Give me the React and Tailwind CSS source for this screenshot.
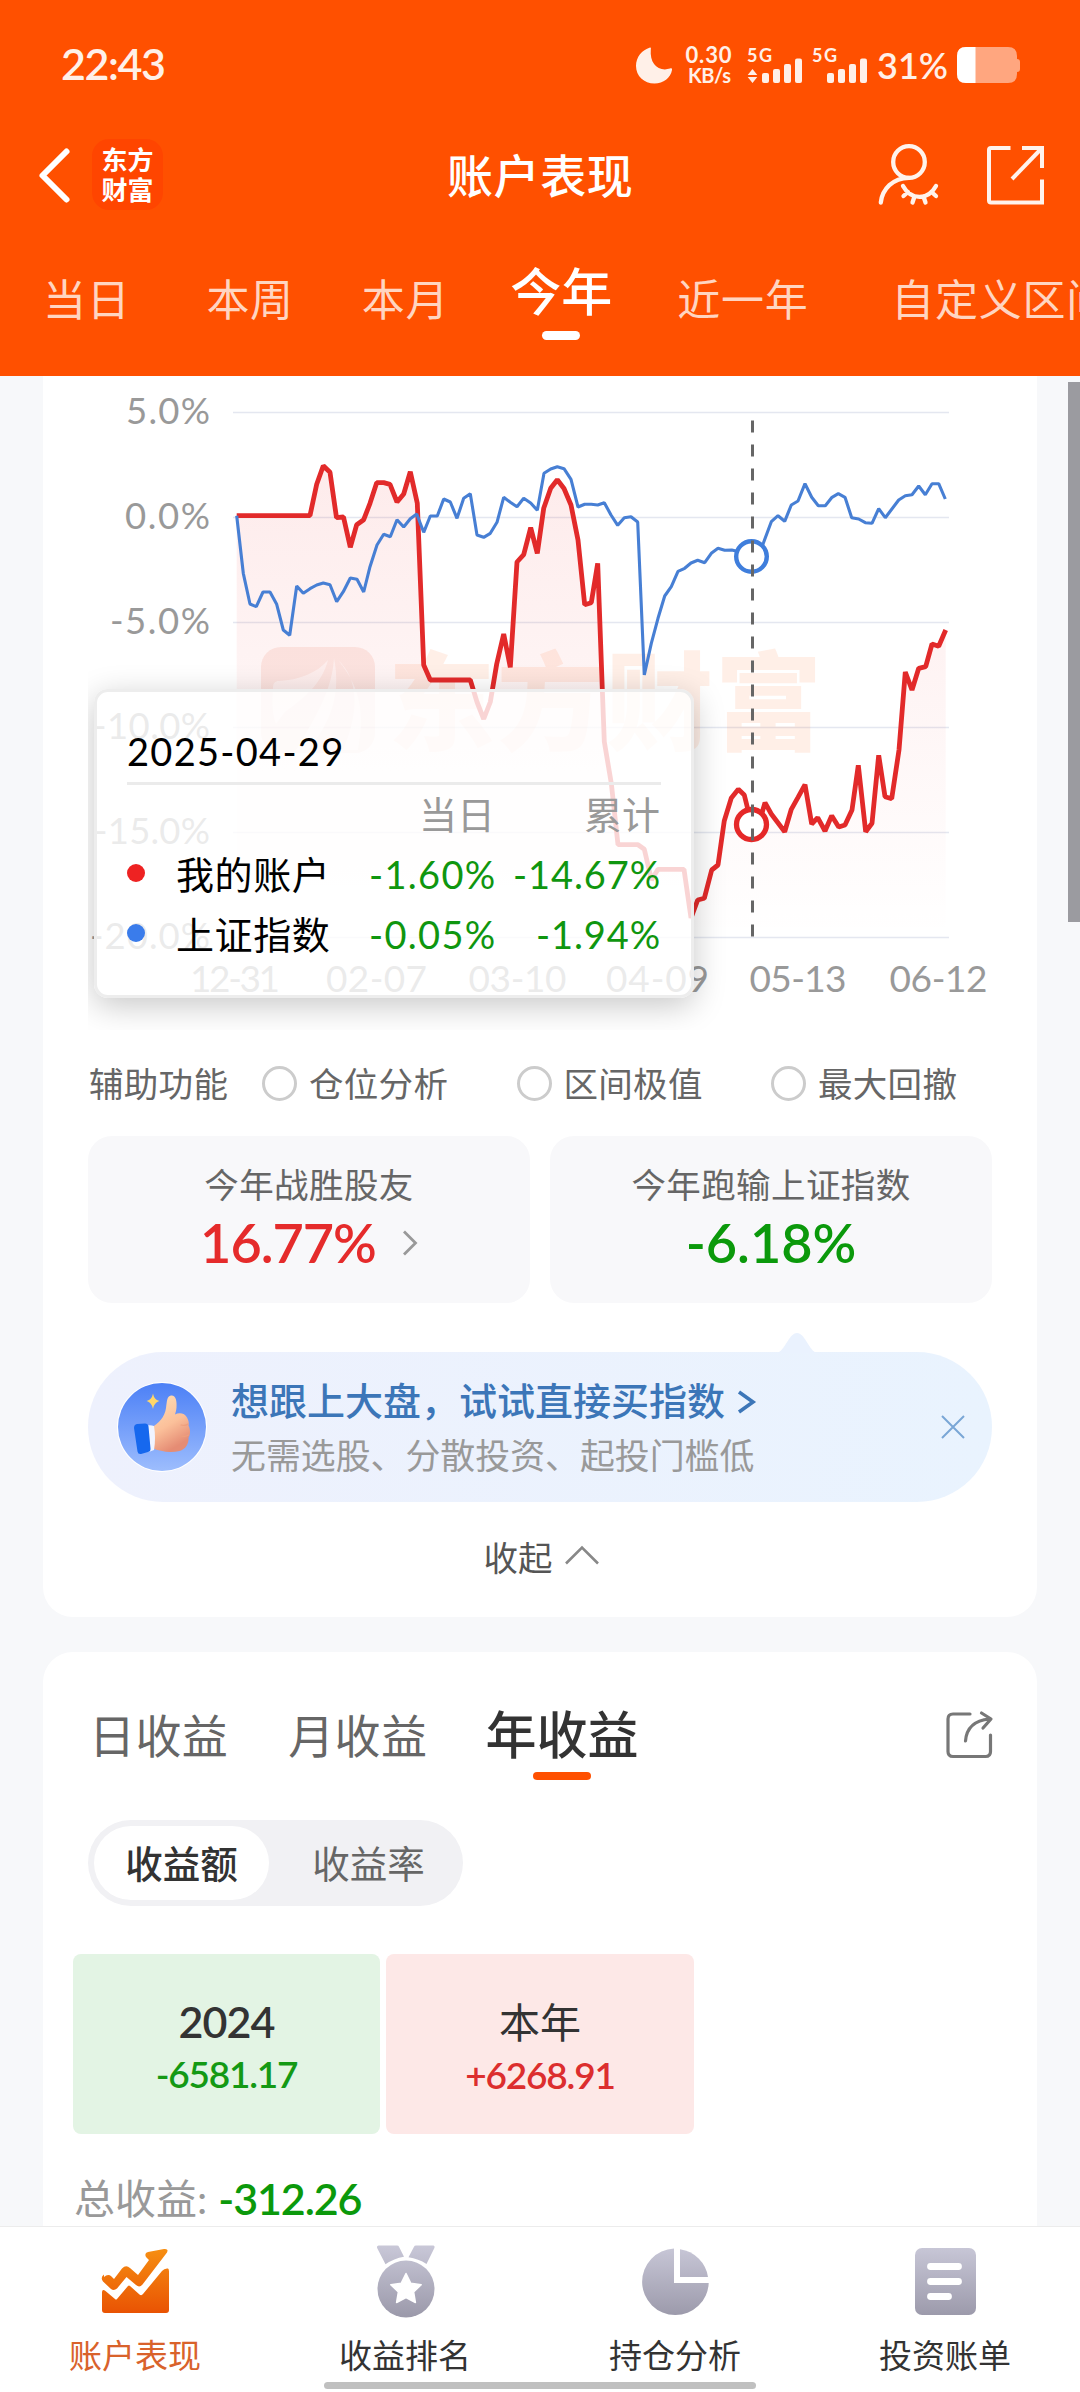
import React, { useState } from 'react';

const RANGE_TABS = [
    { id: 'day', name: '当日', className: 'ml-[43px]' },
    { id: 'week', name: '本周', className: 'ml-[76px]' },
    { id: 'month', name: '本月', className: 'ml-[68px]' },
    { id: 'ytd', name: '今年', className: 'ml-[61px]' },
    { id: 'year', name: '近一年', className: 'ml-[65px]' },
    { id: 'custom', name: '自定义区间', className: 'ml-[83px]' },
];

const HELPERS = ['仓位分析', '区间极值', '最大回撤'];

// Grid lines of the chart, 21px per percent
const Y_TICKS = [
    { label: '5.0%', y: 412.5, width: 84 },
    { label: '0.0%', y: 517.5, width: 85 },
    { label: '-5.0%', y: 622.5, width: 100 },
    { label: '-10.0%', y: 727.5, width: 117 },
    { label: '-15.0%', y: 832.5, width: 116 },
    { label: '-20.0%', y: 937.5, width: 120 },
];

const X_TICKS = [
    { label: '12-31', x: 235, width: 90 },
    { label: '02-07', x: 376.5, width: 101 },
    { label: '03-10', x: 517.5, width: 98 },
    { label: '04-09', x: 657.5, width: 103 },
    { label: '05-13', x: 798, width: 97 },
    { label: '06-12', x: 938.5, width: 98 },
];

const ACCOUNT_LINE = '236.7,515.700 310,515.500 316.7,484.3 323.3,465.7 330,472.3 336.5,517.7 343.5,517 350.3,547.3 356.7,524.7 363.7,519.7 370,503.3 376.7,482.7 383.7,482.7 390,484.3 397,502 403.7,494 410.3,471.7 417.3,503.3 423.7,665 430.3,680 470.3,680 477,702 483.7,719 490.3,702 496.7,664 503.7,634 510.3,667.3 517,562 523.7,554.7 530.7,527.7 537.3,553.3 543.7,508.3 550.7,488.3 557.3,479.7 564,488.5 571,505 578,540 584.7,604.7 591.3,602.7 597.7,563.3 602.3,689 604.3,741.7 611.3,783.3 618,844.7 638,844.7 644.3,849.3 651.5,880 658,869.3 684,869.3 691,918 697.7,900 704.3,898.3 711.7,870 718,865 724.3,820.7 731.3,798 738.3,789.3 744.3,795 751.7,825 758.5,825 765,802.7 771.3,814 784.7,831.7 791.3,809.3 798,797.3 805,784.7 811.7,824 817.7,817.7 825,831 831.7,815.7 838.7,827 845,825 852,810 858.3,765.3 865.7,831.7 872,823.3 878.7,755.3 885,796.7 891.7,798.7 899,750 905.3,672 912,690 918.7,668.3 925.7,666.7 932,644 938.7,646.3 945.7,630';

const INDEX_LINE = '236.7,515.7 243.3,573.3 250,604 256.3,606.7 263,592 270,592 276.7,604.3 283.3,630 289.7,635.3 296.7,586 303.3,593.3 310,588.7 316.7,585 323.3,583 330,584.7 336.7,601.7 343.3,591.7 350.3,578 357,579.3 363.7,592 370,566.7 377,545 383.7,534.3 390.3,536.7 397,519.7 403.7,527 410.3,518.7 416.7,514 423.7,532.3 430.3,516 437.3,516 443.7,499 450.3,502 457,518.3 463.7,498.3 470.3,493.7 477,535 483.7,537.3 490.3,533.3 497,522.3 503.7,497.3 510.3,502.3 517,506.7 523.7,498.3 530.7,503 537.3,510.3 544,473.3 550.7,469 557.3,466.7 564,468.7 571,479.3 578,507 584.7,504.3 591.3,504.3 597.7,505 604.3,502.7 611,515 617.7,525.3 624.3,517.7 631,516.7 637.7,522 644.3,675 651.3,643.3 658,618.3 664.7,596 671.3,586.7 678,571.3 684.7,568.3 691,563 697.7,560.3 704.7,562.7 711.3,553.3 718,548.3 724.7,550.3 731.7,550 738,551.5 751.7,556.7 758,556 763.3,543.3 771.3,521.7 778,515.7 784.7,521.3 791.3,505 798,501 805,483.7 811.7,497.3 818.3,505.7 825.3,505.7 832,497.3 838.3,493.7 845,497.3 851.7,517.7 858.7,519 865.3,522.7 872,523.3 878.7,508.7 885.3,517.7 898.7,500 905.3,495.7 912,494.7 918.7,486 925.3,494.7 932,483.7 938.7,483.7 945.3,499';

const StatusBar = () => (
    <svg className="block h-[110px] w-full" viewBox="0 0 1080 110" fill="#fff0e8">
        <text x="61" y="80" fontSize="43" fontWeight="600" textLength="105">22:43</text>
        <path d="M650 47.5c-8 2.500-14 9.500-14 18.500 0 10 8 17.500 18.500 17.500 9 0 16-5.500 17.500-13.500.3-1.500-.6-2-2-1.400-11.500 3.400-20.500-4.600-19.200-19.100.2-1.400.3-2.200-.8-2z" />
        <text x="685.500" y="63" fontSize="22" fontWeight="700" textLength="46">0.30</text>
        <text x="688" y="82.500" fontSize="20" fontWeight="700" textLength="43">KB/s</text>
        <text x="747" y="61.500" fontSize="18" fontWeight="700" textLength="25">5G</text>
        <text x="812" y="61.500" fontSize="18" fontWeight="700" textLength="25">5G</text>
        <path d="M752.500 69l4.800 6h-9.600zM752.500 83l4.800-6h-9.600z" />
        {[762, 827].map((x) => (
            <g key={x}>
                <rect x={x} y="73" width="7" height="10" rx="2" />
                <rect x={x + 11} y="69" width="7" height="14" rx="2" />
                <rect x={x + 22} y="64" width="7" height="19" rx="2" />
                <rect x={x + 33} y="58.500" width="7" height="24.500" rx="2" />
            </g>
        ))}
        <text x="877" y="79" fontSize="37" fontWeight="600" textLength="71" lengthAdjust="spacingAndGlyphs">31%</text>
        <path d="M966 47h42q9 0 9 9v3q3 0 3 3v7q0 3-3 3v2q0 9-9 9h-42q-9 0-9-9V56q0-9 9-9z" fill="#ffa67f" />
        <path d="M975.500 47v36H966q-9 0-9-9V56q0-9 9-9z" fill="#fff" />
    </svg>
);

const Header = ({ range, onRange }) => (
    <header className="flex h-[376px] shrink-0 flex-col overflow-hidden bg-[#ff5000] text-white">
        <StatusBar />
        <div className="flex h-[132px] items-center">
            <svg className="ml-[36px] h-[60px] w-[40px]" viewBox="0 0 40 60" fill="none" stroke="#fff" strokeWidth="6" strokeLinecap="round" strokeLinejoin="round">
                <path d="M30.500 5.500L6.500 29.500l24 24" />
            </svg>
            <div className="mb-[3px] ml-[16px] flex h-[71px] w-[71px] flex-col items-center justify-center rounded-[17px] bg-[#ff4500] text-[26px] leading-[30px] font-bold">
                <span>东方</span>
                <span>财富</span>
            </div>
            <h1 className="ml-[284px] text-[46px] leading-[60px] font-medium tracking-[0.6px] whitespace-nowrap">账户表现</h1>
            <svg className="mb-[3px] ml-[241px] h-[70px] w-[68px]" viewBox="874 139 68 70" fill="none" stroke="#fff3ec" strokeWidth="4.300" strokeLinecap="round" strokeLinejoin="round">
                <circle cx="909" cy="161" r="15.800" />
                <path d="M880.800 201.500c1.500-13.500 12-24.500 28.200-24.700" />
                <path d="M903 185c8 14.500 25 14.500 33 0M908 191l-4.500 4M914.500 195.500l-2 6M923.500 195.500l2 6M931.500 191l4.500 4" />
            </svg>
            <svg className="mb-[3px] ml-[41px] h-[64px] w-[64px]" viewBox="983 142 64 64" fill="none" stroke="#fff3ec" strokeWidth="4">
                <path d="M1010.500 147H991q-2 0-2 2v50.500q0 2 2 2h53M1022 147h20v20M1042 178.500v23" />
                <path d="M1041 148l-29 30" />
            </svg>
        </div>
        <div className="flex h-[134px] items-start whitespace-nowrap">
            {RANGE_TABS.map((tab) => (
                <button key={tab.id} onClick={() => onRange(tab.id)} className={`flex shrink-0 flex-col items-center ${tab.className}`}>
                    {range === tab.id ? (
                        <>
                            <span className="mt-[20px] text-[51px] leading-[60px] font-medium">{tab.name}</span>
                            <span className="mt-[9px] h-[9px] w-[38px] rounded-full bg-white" />
                        </>
                    ) : (
                        <span className="mt-[28px] text-[43px] leading-[60px] tracking-[0.7px] text-[#ffd5c1]">{tab.name}</span>
                    )}
                </button>
            ))}
        </div>
    </header>
);

const ChartTooltip = () => {
    const rows = [
        { name: '我的账户', dot: 'bg-[#ee2222]', day: '-1.60%', total: '-14.67%' },
        { name: '上证指数', dot: 'bg-[#3a7ceb]', day: '-0.05%', total: '-1.94%' },
    ];

    return (
        <div className="absolute top-[313px] left-[6px] h-[309px] w-[600px] rounded-[14px] border-[3px] border-[#ededed] bg-white/80 px-[30px] pt-[32px] text-[38px] shadow-[0_8px_32px_rgba(0,0,0,0.22)]">
            <div className="h-[61px] border-b-[3px] border-[#ebebeb] leading-[54px] tracking-[1.3px] text-black">2025-04-29</div>
            <div className="flex h-[58px] items-center text-[#999]">
                <span className="w-[368px] text-right">当日</span>
                <span className="w-[165px] text-right">累计</span>
            </div>
            {rows.map((row) => (
                <div key={row.name} className="flex h-[60px] items-center whitespace-nowrap text-black">
                    <span className={`size-[18px] shrink-0 rounded-full ${row.dot}`} />
                    <span className="ml-[31px] w-[153px] pt-[2px] tracking-[0.6px]">{row.name}</span>
                    <span className="w-[168px] pt-[2px] text-right tracking-[1.3px] text-[#0f960f]">{row.day}</span>
                    <span className="w-[165px] pt-[2px] text-right tracking-[0.9px] text-[#0f960f]">{row.total}</span>
                </div>
            ))}
        </div>
    );
};

const PerformanceChart = () => (
    <div className="relative ml-[45px] h-[654px] overflow-hidden">
        <svg className="block h-[654px] w-[949px]" viewBox="88 376 949 654">
            <defs>
                <linearGradient id="area" x1="0" y1="465" x2="0" y2="937" gradientUnits="userSpaceOnUse">
                    <stop offset="0" stopColor="#ee2222" stopOpacity="0.09" />
                    <stop offset="1" stopColor="#ee2222" stopOpacity="0" />
                </linearGradient>
            </defs>
            {Y_TICKS.map((tick) => (
                <g key={tick.label}>
                    <path d={`M233 ${tick.y}h716`} stroke="#e4e7f0" strokeWidth="1.300" />
                    <text x={210 - tick.width} y={tick.y + 11.5} fontSize="36.500" fill="#999" textLength={tick.width}>{tick.label}</text>
                </g>
            ))}
            {X_TICKS.map((tick) => (
                <text key={tick.label} x={tick.x - tick.width / 2} y="992" fontSize="37" fill="#999" textLength={tick.width}>{tick.label}</text>
            ))}

            {/* Watermark */}
            <rect x="261" y="647" width="114" height="106" rx="20" fill="#e85030" fillOpacity="0.11" />
            <path d="M273 688c0-5 2-7 6-7 20-1 38-8 49-21-5 20-19 35-43 52l-9 12c-4-10-4-22-3-36zM334 658c-2 30-14 52-38 92h12c20-24 34-52 26-92zM338 660c20 18 22 50 5 90h15c6-32 5-60-20-90z" fill="#fff" fillOpacity="0.65" />
            <text x="388" y="742" fontSize="107" fontWeight="900" fill="#ff6a20" fillOpacity="0.11" textLength="434">东方财富</text>

            <polygon points={`${ACCOUNT_LINE} 945.7,937 236.7,937`} fill="url(#area)" />
            <polyline points={ACCOUNT_LINE} fill="none" stroke="#e22a2a" strokeWidth="4.800" strokeLinejoin="bevel" />
            <polyline points={INDEX_LINE} fill="none" stroke="#477fd4" strokeWidth="3.100" strokeLinejoin="bevel" />
            <circle cx="751.500" cy="556.500" r="15.300" fill="#fff" stroke="#3f7edc" strokeWidth="4.400" />
            <circle cx="751.500" cy="824.500" r="15" fill="#fff" stroke="#e52828" strokeWidth="5.300" />
            <path d="M752.500 420.500V937" stroke="#666" strokeWidth="3" strokeDasharray="12 12" />
        </svg>
        <ChartTooltip />
    </div>
);

const ThumbIcon = () => (
    <svg className="ml-[29px] size-[90px] shrink-0" viewBox="117 1382 90 90">
        <defs>
            <linearGradient id="thumbBg" x1="0" y1="0" x2="0" y2="1">
                <stop offset="0" stopColor="#4c80f6" />
                <stop offset="1" stopColor="#9dbdfd" />
            </linearGradient>
            <linearGradient id="skin" x1="0" y1="0" x2="0.400" y2="1">
                <stop offset="0" stopColor="#ffe0b8" />
                <stop offset="0.600" stopColor="#fbc09a" />
                <stop offset="1" stopColor="#e58c74" />
            </linearGradient>
        </defs>
        <circle cx="162" cy="1427" r="45" fill="#fff" />
        <circle cx="162" cy="1427" r="44" fill="url(#thumbBg)" />
        <path d="M153 1393.500c1 4.500 2.500 6.500 6.500 7.500-4 1.500-5.500 3.500-6.500 8-1-4.500-2.500-6.500-6.500-8 4-1 5.500-3 6.500-7.500z" fill="#ffd76a" />
        <path d="M152 1427c6-3 13-10 14-19 1-7 1-12 5-12.500 5-.5 6 6 5.500 12-.2 3-1 5-1.500 7 4-2.500 10-1.500 12 3 2 3.500 2 6 1.500 8 2.500 5 1.500 10 0 12 .5 6-3 12-9 13.500-9 2-20 .5-27-3z" fill="url(#skin)" />
        <path d="M181 1425q5 1 7-1M181 1436q5 1 7.500-1" fill="none" stroke="#ee9f7d" strokeWidth="1.200" strokeLinecap="round" />
        <path d="M145 1426q5-1.500 9 0 2 12 0 24-4 2-8 2z" fill="#f0f4ff" />
        <path d="M134 1428q0-3.500 3-4l8-.5q3 0 3.500 3l2 22q.3 3-2.500 3.500l-7 2q-3 .5-3.500-2.500z" fill="#1668ee" />
    </svg>
);

const StatsCard = () => (
    <section className="mx-[43px] h-[1241px] shrink-0 overflow-hidden rounded-b-[30px] bg-white">
        <PerformanceChart />
        <div className="flex h-[106px] items-center pt-[1px] pl-[46px] text-[34.5px] whitespace-nowrap text-[#666]">
            <span className="w-[173px] tracking-[0.3px]">辅助功能</span>
            {HELPERS.map((name) => (
                <label key={name} className="flex w-[254.5px] items-center tracking-[0.3px]">
                    <span className="mr-[12px] size-[35px] rounded-full border-[3px] border-[#ccc]" />
                    {name}
                </label>
            ))}
        </div>
        <div className="mx-[45px] flex h-[167px] gap-[20px] text-center">
            <div className="flex-1 rounded-[24px] bg-[#f8f8fa] pt-[26px]">
                <div className="text-[34.5px] leading-[46px] tracking-[0.4px] text-[#666]">今年战胜股友</div>
                <div className="flex items-center justify-center text-[54px] leading-[70px] font-semibold text-[#e52b2b]">
                    <span className="tracking-[-1px]">16.77%</span>
                    <svg className="ml-[26px] h-[28px] w-[16px]" viewBox="0 0 16 28" fill="none" stroke="#999" strokeWidth="2.800">
                        <path d="M2 2.500L13.500 14 2 25.500" />
                    </svg>
                </div>
            </div>
            <div className="flex-1 rounded-[24px] bg-[#f8f8fa] pt-[26px]">
                <div className="text-[34.5px] leading-[46px] tracking-[0.4px] text-[#666]">今年跑输上证指数</div>
                <div className="text-[54px] leading-[70px] font-semibold text-[#0b990b]">-6.18%</div>
            </div>
        </div>
        <div className="relative mx-[45px] mt-[49px] flex h-[150px] items-center rounded-full bg-linear-to-r from-[#eef1fd] to-[#e9f3fe]">
            <svg className="absolute -top-[19px] left-[689px] h-[20px] w-[40px]" viewBox="0 0 40 20">
                <path d="M0 20C8 18 12 0 20 0s12 18 20 20z" fill="#eaf2fe" />
            </svg>
            <ThumbIcon />
            <div className="ml-[24px] pt-[2px] whitespace-nowrap">
                <div className="flex text-[38px] leading-[55px] font-medium text-[#3c76b8]">
                    想跟上大盘，试试直接买指数
                    <svg className="mt-[17px] ml-[11px] h-[24px] w-[22px]" viewBox="0 0 22 24" fill="none" stroke="#3c76b8" strokeWidth="3.600">
                        <path d="M3 2l14 10L3 22" />
                    </svg>
                </div>
                <div className="text-[34.9px] leading-[56px] text-[#999]">无需选股、分散投资、起投门槛低</div>
            </div>
            <svg className="mr-[27px] ml-auto size-[24px]" viewBox="0 0 24 24" stroke="#7aa6d6" strokeWidth="2">
                <path d="M1 1l22 22M23 1L1 23" />
            </svg>
        </div>
        <button className="flex h-[112px] w-full items-center justify-center pl-[2px] text-[34.5px] text-[#555]">
            收起
            <svg className="mb-[6px] ml-[12px] h-[20px] w-[34px]" viewBox="0 0 34 20" fill="none" stroke="#888" strokeWidth="2.600">
                <path d="M1 18.500L17 2.500l16 16" />
            </svg>
        </button>
    </section>
);

const ProfitCard = () => (
    <section className="mx-[43px] mt-[35px] h-[640px] shrink-0 rounded-t-[30px] bg-white">
        <div className="flex h-[168px] items-center pr-[43px] pb-[2px] pl-[46px] text-[46px] whitespace-nowrap text-[#666]">
            <span className="tracking-[0.4px]">日收益</span>
            <span className="ml-[60px] tracking-[0.4px]">月收益</span>
            <span className="relative ml-[58px] text-[51px] font-medium text-[#333]">
                年收益
                <span className="absolute -bottom-[7px] left-1/2 h-[8px] w-[58px] -translate-x-1/2 rounded-full bg-[#ff5000]" />
            </span>
            <svg className="ml-auto h-[50px] w-[50px]" viewBox="944 1709 50 50" fill="none" stroke="#777" strokeWidth="3.200" strokeLinecap="round" strokeLinejoin="round">
                <path d="M970 1713h-17q-5 0-5 5v32.500q0 5 5 5h32.500q5 0 5-5V1734" />
                <path d="M965.500 1740c1-13 8-20.500 24-22M981.500 1712l9.500 6-8 9" />
            </svg>
        </div>
        <div className="ml-[45px] flex h-[86px] w-[375px] items-center rounded-full bg-[#f1f1f4] p-[6px] text-center text-[37.5px] text-[#666]">
            <span className="flex h-full w-[175px] items-center justify-center rounded-full bg-white pt-[2px] font-medium text-[#333]">收益额</span>
            <span className="flex-1 pt-[2px] pl-[11px]">收益率</span>
        </div>
        <div className="mt-[48px] ml-[30px] flex gap-[6px] text-center text-[#333]">
            <div className="h-[180px] w-[307px] rounded-[8px] bg-[#e3f4e4] pt-[40px]">
                <div className="text-[43px] leading-[56px] font-semibold tracking-[-1px]">2024</div>
                <div className="text-[37px] leading-[48px] font-semibold tracking-[-1.2px] text-[#149914]">-6581.17</div>
            </div>
            <div className="h-[180px] w-[308px] rounded-[8px] bg-[#fde8e7] pt-[40px]">
                <div className="text-[41px] leading-[57px]">本年</div>
                <div className="text-[37px] leading-[47px] font-semibold tracking-[-1.2px] text-[#dc2e2e]">+6268.91</div>
            </div>
        </div>
        <div className="flex h-[130px] items-center pl-[31px] whitespace-nowrap">
            <span className="text-[41px] text-[#999]">总收益:</span>
            <span className="ml-[11px] text-[43px] font-semibold tracking-[-1.1px] text-[#0b990b]">-312.26</span>
        </div>
    </section>
);

const TabBar = () => (
    <nav className="relative flex h-[166px] shrink-0 border-t-[1.5px] border-[#ececec] bg-white text-[33px] text-[#333]">
        <svg className="absolute size-0">
            <defs>
                <linearGradient id="navOn" x1="0" y1="2249" x2="0" y2="2313" gradientUnits="userSpaceOnUse">
                    <stop offset="0" stopColor="#f68e12" />
                    <stop offset="1" stopColor="#e95303" />
                </linearGradient>
                <linearGradient id="navOff" x1="0" y1="2245" x2="0" y2="2317" gradientUnits="userSpaceOnUse">
                    <stop offset="0" stopColor="#c9c8d8" />
                    <stop offset="1" stopColor="#9b99aa" />
                </linearGradient>
            </defs>
        </svg>
        <div className="flex flex-1 flex-col items-center pt-[13px] text-[#d9622b]">
            <svg className="h-[84px] w-[90px]" viewBox="90 2240 90 84" fill="url(#navOn)">
                <path d="M102 2293q0-5 3.500-2l9.500 8q1 1 2 0l11-13q1-1 2 0l9.500 8.500q2 1.500 3.500-.5l19-23q2.500-3 6-2.500 1 .5 1 3v38.500q0 3-3 3h-61q-3 0-3-3z" />
                <path d="M104 2277q4-3.500 7.500-.5l2.500 2.500 8-10.500q4-4 8-.5l8 7 11-15-3-3q-2-4 2-5l16-3q5-.5 3 3.500l-24.500 32q-3 3.500-6.500.5l-9.500-8-9.500 11.500q-3 2.500-6 .500l-8-7.500q-3-4 1-7z" />
            </svg>
            <span className="mt-[9px] leading-[44px]">账户表现</span>
        </div>
        <div className="flex flex-1 flex-col items-center pt-[13px]">
            <svg className="h-[84px] w-[90px]" viewBox="360.500 2240 90 84" fill="url(#navOff)">
                <path d="M379 2245.500h18.500q1.500 0 2 1.300l5 10q-10 1.700-18.500 7.500l-8.500-16.500q-.5-2 1.500-2.300zM434 2245.500h-17.500q-1.500 0-2 1.300l-5.500 10.500q10 1.500 18 6.700l8-16.200q.5-2-1-2.300z" />
                <circle cx="406.500" cy="2289" r="28.500" />
                <path d="M406.500 2273.500l4.700 9.700 10.500 1.500-7.600 7.300 1.800 10.500-9.400-4.800-9.400 4.800 1.800-10.500-7.600-7.300 10.500-1.500z" fill="#fff" stroke="#fff" strokeWidth="1.500" strokeLinejoin="round" />
            </svg>
            <span className="mt-[9px] leading-[44px]">收益排名</span>
        </div>
        <div className="flex flex-1 flex-col items-center pt-[13px]">
            <svg className="h-[84px] w-[90px]" viewBox="630 2240 90 84" fill="url(#navOff)">
                <path d="M674 2248.500V2283h34.700A33.300 33.300 0 1 1 674 2248.500z" />
                <path d="M680 2249.200a33 33 0 0 1 28 27.800h-28z" />
            </svg>
            <span className="mt-[9px] leading-[44px]">持仓分析</span>
        </div>
        <div className="flex flex-1 flex-col items-center pt-[13px]">
            <svg className="h-[84px] w-[90px]" viewBox="900 2240 90 84" fill="url(#navOff)">
                <rect x="915" y="2248" width="61" height="67" rx="7" />
                <path d="M930.500 2266.500h28M930.500 2281.500h28M930.500 2296.500h18" stroke="#fff" strokeWidth="6.800" strokeLinecap="round" />
            </svg>
            <span className="mt-[9px] leading-[44px]">投资账单</span>
        </div>
        <span className="absolute bottom-[3px] left-[324px] h-[7px] w-[432px] rounded-full bg-[#c0c0c0]" />
    </nav>
);

const App = () => {
    const [range, setRange] = useState('ytd');

    return (
        <div className="flex h-[2392px] w-[1080px] flex-col overflow-hidden bg-[#f7f8fa] font-['Lato','Noto_Sans_CJK_SC',sans-serif]">
            <Header range={range} onRange={setRange} />
            <main className="relative flex min-h-0 flex-1 flex-col overflow-hidden">
                <StatsCard />
                <ProfitCard />
                {/* Scroll indicator */}
                <span className="absolute top-[6px] right-0 h-[540px] w-[12px] bg-[#9b9ba0]" />
            </main>
            <TabBar />
        </div>
    );
};

export default App;
